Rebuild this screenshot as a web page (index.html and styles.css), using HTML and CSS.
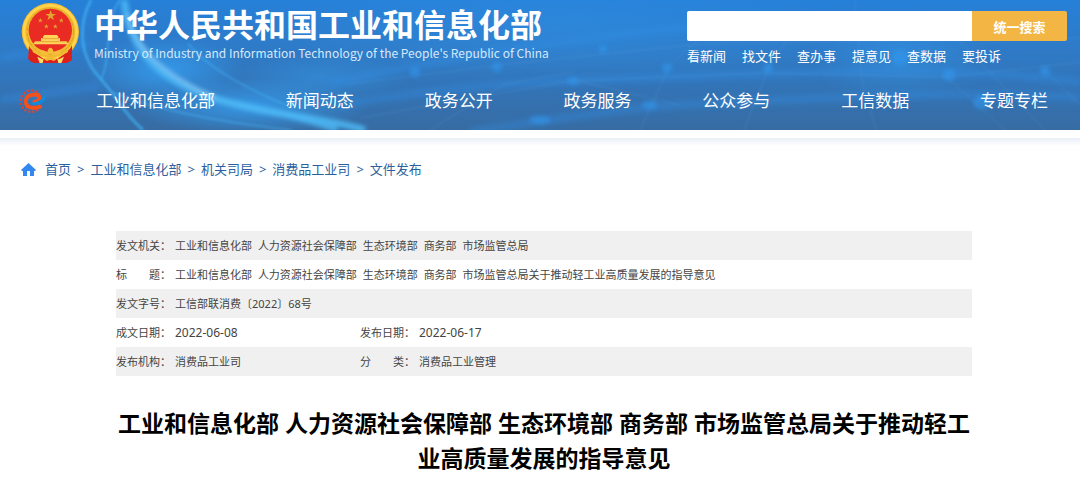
FILE: index.html
```html
<!DOCTYPE html>
<html lang="zh-CN">
<head>
<meta charset="utf-8">
<meta name="viewport" content="width=device-width, initial-scale=1">
<title>中华人民共和国工业和信息化部</title>
<link rel="stylesheet" href="styles.css">
</head>
<body>
<header class="site-header">
  <svg class="header-art" viewBox="0 0 1080 130" preserveAspectRatio="none" aria-hidden="true">
    <defs>
      <linearGradient id="sky" x1="0" y1="0" x2="0" y2="1">
        <stop offset="0" stop-color="#2680d8"/>
        <stop offset=".4" stop-color="#2f7ac6"/>
        <stop offset="1" stop-color="#376ca3"/>
      </linearGradient>
      <radialGradient id="glow">
        <stop offset="0" stop-color="#35a0f2" stop-opacity=".8"/>
        <stop offset="1" stop-color="#35a0f2" stop-opacity="0"/>
      </radialGradient>
      <filter id="soft1" x="-20%" y="-20%" width="140%" height="140%"><feGaussianBlur stdDeviation="1"/></filter>
      <filter id="soft2" x="-20%" y="-20%" width="140%" height="140%"><feGaussianBlur stdDeviation="2"/></filter>
      <filter id="soft3" x="-20%" y="-50%" width="140%" height="200%"><feGaussianBlur stdDeviation="3"/></filter>
    </defs>
    <rect width="1080" height="130" fill="url(#sky)"/>
    <ellipse cx="165" cy="70" rx="80" ry="34" fill="url(#glow)"/>
    <ellipse cx="250" cy="106" rx="120" ry="28" fill="url(#glow)"/>
    <ellipse cx="320" cy="78" rx="90" ry="24" fill="url(#glow)" opacity=".5"/>
    <ellipse cx="560" cy="28" rx="300" ry="60" fill="url(#glow)" opacity=".35"/>
    <ellipse cx="900" cy="55" rx="90" ry="50" fill="url(#glow)" opacity=".5"/>
    <g fill="none" stroke="#3191ea" stroke-width="6" opacity=".45" filter="url(#soft3)">
      <path d="M0 58L90 44M0 100L100 86M330 84C430 60 560 40 700 26"/>
      <path d="M340 105C470 82 580 80 700 76S960 66 1080 82"/>
      <path d="M470 132C560 118 640 106 700 104S950 88 1080 98"/>
    </g>
    <g fill="none" stroke="#44b2f4" filter="url(#soft1)">
      <path d="M91 0C78 24 79 55 99 77S122 112 143 130" stroke-width="3" opacity=".65"/>
      <path d="M120 0C103 21 112 60 101 79" stroke-width="2" opacity=".55"/>
      <path d="M112 92C160 112 235 124 292 130M188 44C210 69 240 85 292 108" stroke-width="2" opacity=".45"/>
    </g>
    <g fill="none" stroke="#4cb8f5" filter="url(#soft2)">
      <path d="M124 0C130 55 164 83 220 100S310 114 365 130" stroke-width="7" opacity=".85"/>
      <path d="M208 98C258 108 306 118 337 130" stroke-width="6" opacity=".8"/>
      <path d="M127 14C139 58 176 80 215 98" stroke="#8bc7f7" stroke-width="4" opacity=".7"/>
    </g>
    <g fill="none" stroke="#66a6df" opacity=".25" filter="url(#soft1)">
      <path d="M430 130L505 84L574 72M640 130L670 65L720 20M744 130L770 65L800 20M855 0L862 82L876 130M943 74L1005 130M1045 70L1080 105M574 80L680 105M930 10L1045 130"/>
      <path d="M350 84L500 65L700 44L1080 38M360 118L570 81L760 73L950 77L1080 62"/>
    </g>
    <g fill="#3398ef" opacity=".6" filter="url(#soft2)">
      <ellipse cx="573" cy="81" rx="6" ry="4"/><ellipse cx="540" cy="120" rx="11" ry="4"/><ellipse cx="650" cy="105" rx="8" ry="4"/><circle cx="667" cy="68" r="5"/><circle cx="603" cy="49" r="4"/><circle cx="415" cy="72" r="5"/><circle cx="497" cy="67" r="5"/><circle cx="768" cy="68" r="5"/><circle cx="949" cy="75" r="6"/><circle cx="1045" cy="71" r="5"/><circle cx="900" cy="58" r="8"/><ellipse cx="982" cy="102" rx="9" ry="7"/>
    </g>
  </svg>

  <div class="header-top">
    <div class="brand">
      <svg class="emblem" viewBox="64 7 174 186" role="img" aria-label="国徽">
        <path d="M89 139L86 178Q94 189 105 190H200L215 181L217 139Z" fill="#d51d1b"/>
        <path d="M104 150Q151 190 202 148L198 177Q150 164 105 178Z" fill="#a91418"/>
        <circle cx="152" cy="96" r="86" fill="#f0b930"/>
        <circle cx="152" cy="96" r="79" fill="none" stroke="#ffd44c" stroke-width="8"/>
        <circle cx="152" cy="96" r="70" fill="none" stroke="#dba128" stroke-width="3" stroke-dasharray="12 5"/>
        <path d="M88 137Q90 148 103 154Q128 182 152 182Q177 182 202 154Q213 148 217 137L217 181L200 190H105L86 178Z" fill="#dc211d"/>
        <path d="M93 139Q118 166 152 167Q186 166 211 139L204 158Q180 174 152 174Q124 174 100 158Z" fill="#f0b930"/>
        <circle cx="152" cy="92" r="65" fill="#e92b24"/>
        <g fill="#e3a531">
          <path d="M153 31L157 43H169L159 50L163 62L153 54L143 62L147 50L137 43H149Z"/>
          <path d="M122 55L124 60H129L125 63L127 69L122 65L117 69L119 63L115 60H120ZM185 55L187 60H192L188 63L190 69L185 65L180 69L182 63L178 60H183ZM140 73L142 78H147L143 81L145 87L140 83L135 87L137 81L133 78H138ZM167 73L169 78H174L170 81L172 87L167 83L162 87L164 81L160 78H165Z"/>
        </g>
        <path d="M130 111L134 106H172L176 111V115H181V124H200L207 134H100L107 124H124V115H130Z" fill="#ffd35a"/>
        <path d="M105 126H202M127 117H179" stroke="#d98d26" stroke-width="2"/>
        <path d="M119 151Q134 151 143 158Q145 144 152 144Q160 144 162 158Q173 151 187 151L180 164L165 168L152 160L139 168L124 164Z" fill="#f5bd38"/>
        <path d="M113 171L129 179L134 169L129 190H120ZM193 171L177 179L171 169L176 190H185Z" fill="#ffe06b"/>
        <path d="M134 179Q152 164 170 179L163 184L152 180L141 184Z" fill="#f2b932"/>
      </svg>
      <div class="brand-text">
        <div class="brand-name">中华人民共和国工业和信息化部</div>
        <div class="brand-english" lang="en">Ministry of Industry and Information Technology of the People's Republic of China</div>
      </div>
    </div>

    <div class="search-area">
      <form class="search" role="search">
        <input class="search-input" type="search" aria-label="搜索">
        <button class="search-button" type="button">统一搜索</button>
      </form>
      <nav class="quick-links" aria-label="快捷入口">
        <a href="#">看新闻</a>
        <a href="#">找文件</a>
        <a href="#">查办事</a>
        <a href="#">提意见</a>
        <a href="#">查数据</a>
        <a href="#">要投诉</a>
      </nav>
    </div>
  </div>

  <div class="header-nav">
    <svg class="nav-logo" viewBox="56 262 81 70" aria-hidden="true">
      <path d="M118 278A32 32 0 1 0 118 317" fill="none" stroke="#e8412c" stroke-width="7" stroke-dasharray="6 6"/>
      <path d="M97 299C106 300 117 296 118 289C117 280 108 277 98 278C84 279 76 288 76 299C77 312 86 317 97 317C108 318 117 316 122 311" fill="none" stroke="#f4511a" stroke-width="12"/>
      <path d="M92 305C113 311 138 300 134 280C127 297 109 303 92 305Z" fill="#128bdc" stroke="#128bdc" stroke-width="4" stroke-linejoin="round"/>
    </svg>
    <nav class="main-nav" aria-label="主导航">
      <a href="#">工业和信息化部</a>
      <a href="#">新闻动态</a>
      <a href="#">政务公开</a>
      <a href="#">政务服务</a>
      <a href="#">公众参与</a>
      <a href="#">工信数据</a>
      <a href="#">专题专栏</a>
    </nav>
  </div>
</header>

<main class="page">
  <nav class="breadcrumb" aria-label="当前位置">
    <svg class="home" viewBox="0 0 15 13" aria-hidden="true"><path d="M7.5 0L15 7L14 8H13V13H9V8H6V13H2V8H1L0 7Z" fill="#3388ef"/></svg>
    <a href="#">首页</a><span>&gt;</span>
    <a href="#">工业和信息化部</a><span>&gt;</span>
    <a href="#">机关司局</a><span>&gt;</span>
    <a href="#">消费品工业司</a><span>&gt;</span>
    <a href="#">文件发布</a>
  </nav>

  <article class="document">
    <table class="meta">
      <colgroup><col class="col-label"><col class="col-value"><col class="col-label"><col></colgroup>
      <tr><th scope="row">发文机关：</th><td colspan="3"><span class="body-name">工业和信息化部</span> <span class="body-name">人力资源社会保障部</span> <span class="body-name">生态环境部</span> <span class="body-name">商务部</span> 市场监管总局</td></tr>
      <tr><th scope="row">标　　题：</th><td colspan="3"><span class="body-name">工业和信息化部</span> <span class="body-name">人力资源社会保障部</span> <span class="body-name">生态环境部</span> <span class="body-name">商务部</span> 市场监管总局关于推动轻工业高质量发展的指导意见</td></tr>
      <tr><th scope="row">发文字号：</th><td colspan="3">工信部联消费〔2022〕68号</td></tr>
      <tr><th scope="row">成文日期：</th><td class="date">2022-06-08</td><th scope="row">发布日期：</th><td class="date">2022-06-17</td></tr>
      <tr><th scope="row">发布机构：</th><td>消费品工业司</td><th scope="row">分　　类：</th><td>消费品工业管理</td></tr>
    </table>
    <h1 class="title">工业和信息化部 人力资源社会保障部 生态环境部 商务部 市场监管总局关于推动轻工业高质量发展的指导意见</h1>
  </article>
</main>
</body>
</html>
```

FILE: styles.css
```css
* {
  box-sizing: border-box;
}

body {
  margin: 0;
  background: #fff;
  color: #444;
  font-family: "Noto Sans", "Noto Sans CJK SC", sans-serif;
}

a {
  color: inherit;
  text-decoration: none;
  white-space: nowrap;
}

.site-header {
  position: relative;
  color: #fff;
  background: #2f78c2;
}

.header-art {
  position: absolute;
  inset: 0;
  width: 100%;
  height: 100%;
}

.header-top {
  position: relative;
  display: flex;
  justify-content: space-between;
  padding: 2px 13px 0 21px;
}

.brand {
  display: flex;
  gap: 15px;
}

.emblem {
  width: 58px;
  height: 62px;
}

.brand-text {
  padding-top: 6px;
  white-space: nowrap;
}

.brand-name {
  font-family: "Liberation Sans", "Noto Sans CJK SC", sans-serif;
  font-size: 32px;
  font-weight: 700;
  line-height: 36px;
}

.brand-english {
  font-family: "Noto Sans CJK SC", sans-serif;
  font-size: 12px;
  line-height: 18px;
  color: #d5e9fb;
}

.search-area {
  width: 380px;
  padding-top: 9px;
}

.search {
  display: flex;
  height: 30px;
  border-radius: 2px;
  overflow: hidden;
}

.search-input {
  flex: 1;
  min-width: 0;
  padding: 0 10px;
  border: 0;
  background: #fff;
  font: inherit;
  font-size: 13px;
}

.search-button {
  width: 95px;
  padding: 0;
  border: 0;
  background: #f3b544;
  color: #fff;
  font: inherit;
  font-size: 13px;
  font-weight: 700;
}

.quick-links {
  display: flex;
  gap: 16px;
  padding-top: 5px;
  font-size: 13px;
  line-height: 20px;
}

.header-nav {
  position: relative;
  display: flex;
  align-items: center;
  gap: 50px;
  padding: 19px 32px 13px 19px;
}

.nav-logo {
  width: 27px;
  height: 24px;
}

.main-nav {
  flex: 1;
  display: flex;
  justify-content: space-between;
  font-size: 17px;
  line-height: 32px;
}

.page {
  margin-top: 8px;
  background: linear-gradient(#ebeff8, #fff 8px);
}

.breadcrumb {
  display: flex;
  align-items: center;
  gap: 6px;
  padding: 21px 21px 0;
  font-size: 13px;
  line-height: 20px;
  color: #2c5f9e;
}

.home {
  width: 15px;
  height: 13px;
  margin-right: 3px;
}

.document {
  padding: 52px 108px 16px 116px;
}

.meta {
  width: 100%;
  border-collapse: collapse;
  table-layout: fixed;
  font-size: 11px;
  line-height: 17px;
}

.meta tr:nth-child(odd) {
  background: #f0f0f0;
}

.meta th,
.meta td {
  padding: 6px 0;
  font-weight: 400;
  text-align: left;
  white-space: nowrap;
}

.meta .date {
  font-size: 12px;
}

.col-label {
  width: 59px;
}

.col-value {
  width: 185px;
}

.body-name {
  margin-right: 3px;
}

.title {
  margin: 30px 0 0;
  color: #000;
  font-size: 23px;
  font-weight: 700;
  line-height: 35px;
  text-align: center;
}
```
